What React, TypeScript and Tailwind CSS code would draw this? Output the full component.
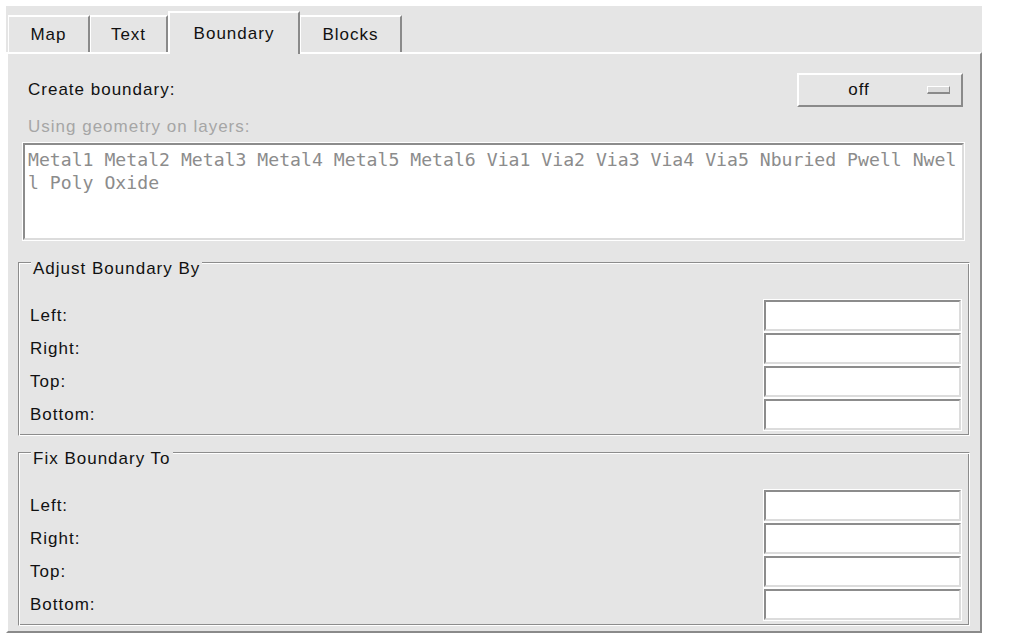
import React from 'react';

const sans = "font-['Liberation_Sans',Arial,sans-serif] text-[17px] tracking-[1px] text-[#111]";

const tabs = [
  { label: 'Map', w: 'w-[82px]' },
  { label: 'Text', w: 'w-[78px]' },
  { label: 'Boundary', w: 'w-[132px]', active: true },
  { label: 'Blocks', w: 'w-[102px]' },
];

const layers =
  'Metal1 Metal2 Metal3 Metal4 Metal5 Metal6 Via1 Via2 Via3 Via4 Via5 Nburied Pwell Nwell Poly Oxide';

const Tab: React.FC<{ label: string; w: string; active?: boolean }> = ({ label, w, active }) => (
  <div
    className={
      active
        ? `${w} h-[43px] -mb-[2px] relative z-10 flex items-center justify-center bg-[#e5e5e5] border-t-2 border-l-2 border-t-white border-l-white border-r-2 border-r-[#8a8a8a]`
        : `${w} h-[37px] flex items-center justify-center bg-[#e5e5e5] border-t-2 border-l border-t-white border-l-white border-r-2 border-r-[#8a8a8a]`
    }
  >
    <span className={sans}>{label}</span>
  </div>
);

const Field: React.FC<{ label: string }> = ({ label }) => (
  <div className="h-[33px] flex items-center justify-between pl-[11px] pr-[8px]">
    <span className={sans}>{label}</span>
    <input
      className="w-[197px] h-[31px] bg-white border-2 border-t-[#8c8c8c] border-l-[#8c8c8c] border-r-[#dcdcdc] border-b-[#dcdcdc] shadow-[0_0_0_1px_white] outline-none"
    />
  </div>
);

const Group: React.FC<{ title: string; className?: string }> = ({ title, className }) => (
  <div
    className={`relative h-[174px] pt-[36px] pb-[4px] border border-t-[#8c8c8c] border-l-[#8c8c8c] border-r-white border-b-white shadow-[inset_1px_1px_0_white,inset_-1px_-1px_0_#8c8c8c] ${className ?? ''}`}
  >
    <span className={`absolute -top-[4px] left-[12px] px-[2px] leading-[20px] bg-[#e5e5e5] ${sans}`}>{title}</span>
    <Field label="Left:" />
    <Field label="Right:" />
    <Field label="Top:" />
    <Field label="Bottom:" />
  </div>
);

const App: React.FC = () => {
  return (
    <div className="min-h-screen bg-white pt-[6px] pl-[6px]">
      <div className="w-[976px] bg-[#e5e5e5]">
        <div className="h-[46px] flex items-end pl-[2px]">
          {tabs.map((t) => (
            <Tab key={t.label} {...t} />
          ))}
        </div>

        <div className="border-2 border-t-white border-l-white border-r-[#8a8a8a] border-b-[#8a8a8a] px-[10px] pt-[19px] pb-[5px]">
          <div className="h-[34px] flex items-center justify-between pl-[10px] pr-[7px]">
            <span className={sans}>Create boundary:</span>
            <div className="w-[166px] h-[34px] flex items-center border-2 border-t-white border-l-white border-r-[#8a8a8a] border-b-[#8a8a8a]">
              <span className={`flex-1 text-center pr-[8px] ${sans}`}>off</span>
              <div className="w-[23px] h-[8px] mr-[11px] bg-[#dcdcdc] border border-t-white border-l-white border-r-[#8a8a8a] border-b-2 border-b-[#8a8a8a]" />
            </div>
          </div>

          <div className={`mt-[10px] pl-[10px] leading-[20px] ${sans} text-[#a6a6a6]`}>Using geometry on layers:</div>

          <div className="mt-[6px] ml-[5px] w-[941px] h-[97px] bg-white border-2 border-t-[#8c8c8c] border-l-[#8c8c8c] border-r-[#dcdcdc] border-b-[#dcdcdc] shadow-[0_0_0_1px_white] pl-[3px] pt-[3px]">
            <p className="font-['DejaVu_Sans_Mono',monospace] text-[18.15px] leading-[23px] text-[#8c8c8c] break-all">
              {layers}
            </p>
          </div>

          <Group title="Adjust Boundary By" className="mt-[22px]" />
          <Group title="Fix Boundary To" className="mt-[16px]" />
        </div>
      </div>
    </div>
  );
};

export default App;
